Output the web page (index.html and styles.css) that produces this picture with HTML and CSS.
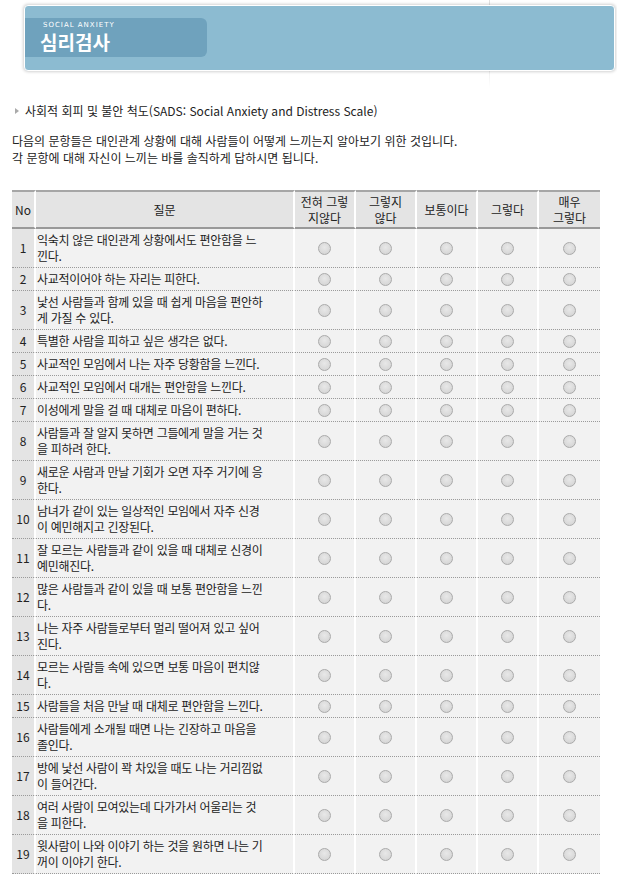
FILE: index.html
```html
<!DOCTYPE html>
<html lang="ko">
<head>
<meta charset="utf-8">
<title>심리검사 - 사회적 회피 및 불안 척도</title>
<link rel="stylesheet" href="styles.css">
</head>
<body>
<div class="page">
  <div class="deco-line"></div>
  <header class="banner">
    <div class="banner-tab">
      <span class="banner-sub">SOCIAL ANXIETY</span>
      <span class="banner-title">심리검사</span>
    </div>
  </header>

  <h2 class="test-title"><span class="bullet"></span>사회적 회피 및 불안 척도(SADS: Social Anxiety and Distress Scale)</h2>

  <p class="intro">다음의 문항들은 대인관계 상황에 대해 사람들이 어떻게 느끼는지 알아보기 위한 것입니다.<br>각 문항에 대해 자신이 느끼는 바를 솔직하게 답하시면 됩니다.</p>

  <table class="survey">
    <thead>
      <tr>
        <th class="c-no">No</th>
        <th class="c-q">질문</th>
        <th class="c-a">전혀 그렇<br>지않다</th>
        <th class="c-a">그렇지<br>않다</th>
        <th class="c-a">보통이다</th>
        <th class="c-a">그렇다</th>
        <th class="c-a last">매우<br>그렇다</th>
      </tr>
    </thead>
    <tbody id="rows">
      <tr><td class="no">1</td><td class="q">익숙치 않은 대인관계 상황에서도 편안함을 느<br>낀다.</td><td><input type="radio" name="q1" value="1"></td><td><input type="radio" name="q1" value="2"></td><td><input type="radio" name="q1" value="3"></td><td><input type="radio" name="q1" value="4"></td><td class="last"><input type="radio" name="q1" value="5"></td></tr>
      <tr><td class="no">2</td><td class="q">사교적이어야 하는 자리는 피한다.</td><td><input type="radio" name="q2" value="1"></td><td><input type="radio" name="q2" value="2"></td><td><input type="radio" name="q2" value="3"></td><td><input type="radio" name="q2" value="4"></td><td class="last"><input type="radio" name="q2" value="5"></td></tr>
      <tr><td class="no">3</td><td class="q">낯선 사람들과 함께 있을 때 쉽게 마음을 편안하<br>게 가질 수 있다.</td><td><input type="radio" name="q3" value="1"></td><td><input type="radio" name="q3" value="2"></td><td><input type="radio" name="q3" value="3"></td><td><input type="radio" name="q3" value="4"></td><td class="last"><input type="radio" name="q3" value="5"></td></tr>
      <tr><td class="no">4</td><td class="q">특별한 사람을 피하고 싶은 생각은 없다.</td><td><input type="radio" name="q4" value="1"></td><td><input type="radio" name="q4" value="2"></td><td><input type="radio" name="q4" value="3"></td><td><input type="radio" name="q4" value="4"></td><td class="last"><input type="radio" name="q4" value="5"></td></tr>
      <tr><td class="no">5</td><td class="q">사교적인 모임에서 나는 자주 당황함을 느낀다.</td><td><input type="radio" name="q5" value="1"></td><td><input type="radio" name="q5" value="2"></td><td><input type="radio" name="q5" value="3"></td><td><input type="radio" name="q5" value="4"></td><td class="last"><input type="radio" name="q5" value="5"></td></tr>
      <tr><td class="no">6</td><td class="q">사교적인 모임에서 대개는 편안함을 느낀다.</td><td><input type="radio" name="q6" value="1"></td><td><input type="radio" name="q6" value="2"></td><td><input type="radio" name="q6" value="3"></td><td><input type="radio" name="q6" value="4"></td><td class="last"><input type="radio" name="q6" value="5"></td></tr>
      <tr><td class="no">7</td><td class="q">이성에게 말을 걸 때 대체로 마음이 편하다.</td><td><input type="radio" name="q7" value="1"></td><td><input type="radio" name="q7" value="2"></td><td><input type="radio" name="q7" value="3"></td><td><input type="radio" name="q7" value="4"></td><td class="last"><input type="radio" name="q7" value="5"></td></tr>
      <tr><td class="no">8</td><td class="q">사람들과 잘 알지 못하면 그들에게 말을 거는 것<br>을 피하려 한다.</td><td><input type="radio" name="q8" value="1"></td><td><input type="radio" name="q8" value="2"></td><td><input type="radio" name="q8" value="3"></td><td><input type="radio" name="q8" value="4"></td><td class="last"><input type="radio" name="q8" value="5"></td></tr>
      <tr><td class="no">9</td><td class="q">새로운 사람과 만날 기회가 오면 자주 거기에 응<br>한다.</td><td><input type="radio" name="q9" value="1"></td><td><input type="radio" name="q9" value="2"></td><td><input type="radio" name="q9" value="3"></td><td><input type="radio" name="q9" value="4"></td><td class="last"><input type="radio" name="q9" value="5"></td></tr>
      <tr><td class="no">10</td><td class="q">남녀가 같이 있는 일상적인 모임에서 자주 신경<br>이 예민해지고 긴장된다.</td><td><input type="radio" name="q10" value="1"></td><td><input type="radio" name="q10" value="2"></td><td><input type="radio" name="q10" value="3"></td><td><input type="radio" name="q10" value="4"></td><td class="last"><input type="radio" name="q10" value="5"></td></tr>
      <tr><td class="no">11</td><td class="q">잘 모르는 사람들과 같이 있을 때 대체로 신경이<br>예민해진다.</td><td><input type="radio" name="q11" value="1"></td><td><input type="radio" name="q11" value="2"></td><td><input type="radio" name="q11" value="3"></td><td><input type="radio" name="q11" value="4"></td><td class="last"><input type="radio" name="q11" value="5"></td></tr>
      <tr><td class="no">12</td><td class="q">많은 사람들과 같이 있을 때 보통 편안함을 느낀<br>다.</td><td><input type="radio" name="q12" value="1"></td><td><input type="radio" name="q12" value="2"></td><td><input type="radio" name="q12" value="3"></td><td><input type="radio" name="q12" value="4"></td><td class="last"><input type="radio" name="q12" value="5"></td></tr>
      <tr><td class="no">13</td><td class="q">나는 자주 사람들로부터 멀리 떨어져 있고 싶어<br>진다.</td><td><input type="radio" name="q13" value="1"></td><td><input type="radio" name="q13" value="2"></td><td><input type="radio" name="q13" value="3"></td><td><input type="radio" name="q13" value="4"></td><td class="last"><input type="radio" name="q13" value="5"></td></tr>
      <tr><td class="no">14</td><td class="q">모르는 사람들 속에 있으면 보통 마음이 편치않<br>다.</td><td><input type="radio" name="q14" value="1"></td><td><input type="radio" name="q14" value="2"></td><td><input type="radio" name="q14" value="3"></td><td><input type="radio" name="q14" value="4"></td><td class="last"><input type="radio" name="q14" value="5"></td></tr>
      <tr><td class="no">15</td><td class="q">사람들을 처음 만날 때 대체로 편안함을 느낀다.</td><td><input type="radio" name="q15" value="1"></td><td><input type="radio" name="q15" value="2"></td><td><input type="radio" name="q15" value="3"></td><td><input type="radio" name="q15" value="4"></td><td class="last"><input type="radio" name="q15" value="5"></td></tr>
      <tr><td class="no">16</td><td class="q">사람들에게 소개될 때면 나는 긴장하고 마음을<br>졸인다.</td><td><input type="radio" name="q16" value="1"></td><td><input type="radio" name="q16" value="2"></td><td><input type="radio" name="q16" value="3"></td><td><input type="radio" name="q16" value="4"></td><td class="last"><input type="radio" name="q16" value="5"></td></tr>
      <tr><td class="no">17</td><td class="q">방에 낯선 사람이 꽉 차있을 때도 나는 거리낌없<br>이 들어간다.</td><td><input type="radio" name="q17" value="1"></td><td><input type="radio" name="q17" value="2"></td><td><input type="radio" name="q17" value="3"></td><td><input type="radio" name="q17" value="4"></td><td class="last"><input type="radio" name="q17" value="5"></td></tr>
      <tr><td class="no">18</td><td class="q">여러 사람이 모여있는데 다가가서 어울리는 것<br>을 피한다.</td><td><input type="radio" name="q18" value="1"></td><td><input type="radio" name="q18" value="2"></td><td><input type="radio" name="q18" value="3"></td><td><input type="radio" name="q18" value="4"></td><td class="last"><input type="radio" name="q18" value="5"></td></tr>
      <tr><td class="no">19</td><td class="q">윗사람이 나와 이야기 하는 것을 원하면 나는 기<br>꺼이 이야기 한다.</td><td><input type="radio" name="q19" value="1"></td><td><input type="radio" name="q19" value="2"></td><td><input type="radio" name="q19" value="3"></td><td><input type="radio" name="q19" value="4"></td><td class="last"><input type="radio" name="q19" value="5"></td></tr>
    </tbody>
  </table>
</div>
</body>
</html>
```
FILE: styles.css
```css
* { box-sizing: border-box; }
html, body { margin: 0; padding: 0; background: #fff; }
body {
  font-family: "Noto Sans CJK KR", "Noto Sans", sans-serif;
  font-size: 12px;
  color: #222;
}
.page {
  position: relative;
  padding: 5px 0 0 12px;
  width: 617px;
}
.deco-line {
  position: absolute;
  left: 489px;
  top: 0;
  width: 1px;
  height: 88px;
  background: linear-gradient(#e2e2e2, #e6e6e6 70%, #fff);
}
.banner {
  position: relative;
  margin-left: 12px;
  width: 591px;
  height: 66px;
  background: #8cbbd1;
  border: 1px solid #fff;
  border-radius: 4px;
  box-shadow: 0 0 3px 1px rgba(0,0,0,0.18);
  padding-top: 12px;
}
.banner-tab {
  width: 182px;
  height: 39px;
  background: #6fa2bd;
  border-radius: 0 6px 6px 0;
  display: flex;
  flex-direction: column;
  padding: 4px 0 0 15px;
}
.banner-sub {
  font-family: "DejaVu Sans", sans-serif;
  font-size: 7px;
  line-height: 7px;
  letter-spacing: 1px;
  color: #fff;
  padding-left: 3px;
}
.banner-title {
  margin-top: 3px;
  font-size: 19px;
  font-weight: bold;
  line-height: 20px;
  color: #fff;
}
.test-title {
  margin: 32px 0 0 0;
  font-size: 12px;
  font-weight: normal;
  line-height: 16px;
  display: flex;
  align-items: center;
  color: #222;
}
.bullet {
  width: 0;
  height: 0;
  border-left: 4px solid #aaa;
  border-top: 3.5px solid transparent;
  border-bottom: 3.5px solid transparent;
  margin: 0 6px 0 3px;
}
.intro {
  margin: 13px 0 0 0;
  line-height: 17px;
}
.survey {
  margin-top: 24px;
  width: 588px;
  table-layout: fixed;
  border-collapse: separate;
  border-spacing: 0;
}
.survey th {
  background: #e4e4e4;
  font-weight: normal;
  line-height: 16px;
  padding: 2px 0 1px;
  border-top: 2px solid #a6a6a6;
  border-bottom: 2px solid #999;
  border-right: 2px solid #fff;
  text-align: center;
  color: #222;
}
.survey th.c-no { width: 24px; }
.survey th.c-q { width: 259px; }
.survey th.c-a { width: 61px; }
.survey th.last, .survey td.last { border-right: 0; }
.survey td {
  background: #f2f2f2;
  border-right: 2px solid #fff;
  border-bottom: 1px dotted #9a9a9a;
  padding: 3px 0;
  line-height: 16px;
  text-align: center;
  vertical-align: middle;
}
.survey td.no {
  background: #e4e4e4;
}
.survey td.q {
  text-align: left;
  padding-left: 1px;
  white-space: nowrap;
  overflow: hidden;
  letter-spacing: -0.3px;
}
.survey input[type="radio"] {
  -webkit-appearance: none;
  appearance: none;
  display: block;
  margin: 0 auto;
  width: 13px;
  height: 13px;
  border-radius: 50%;
  border: 1px solid #aaa;
  background: radial-gradient(circle at 50% 40%, #e8e8e8 0%, #dadada 60%, #cfcfcf 100%);
}
```
